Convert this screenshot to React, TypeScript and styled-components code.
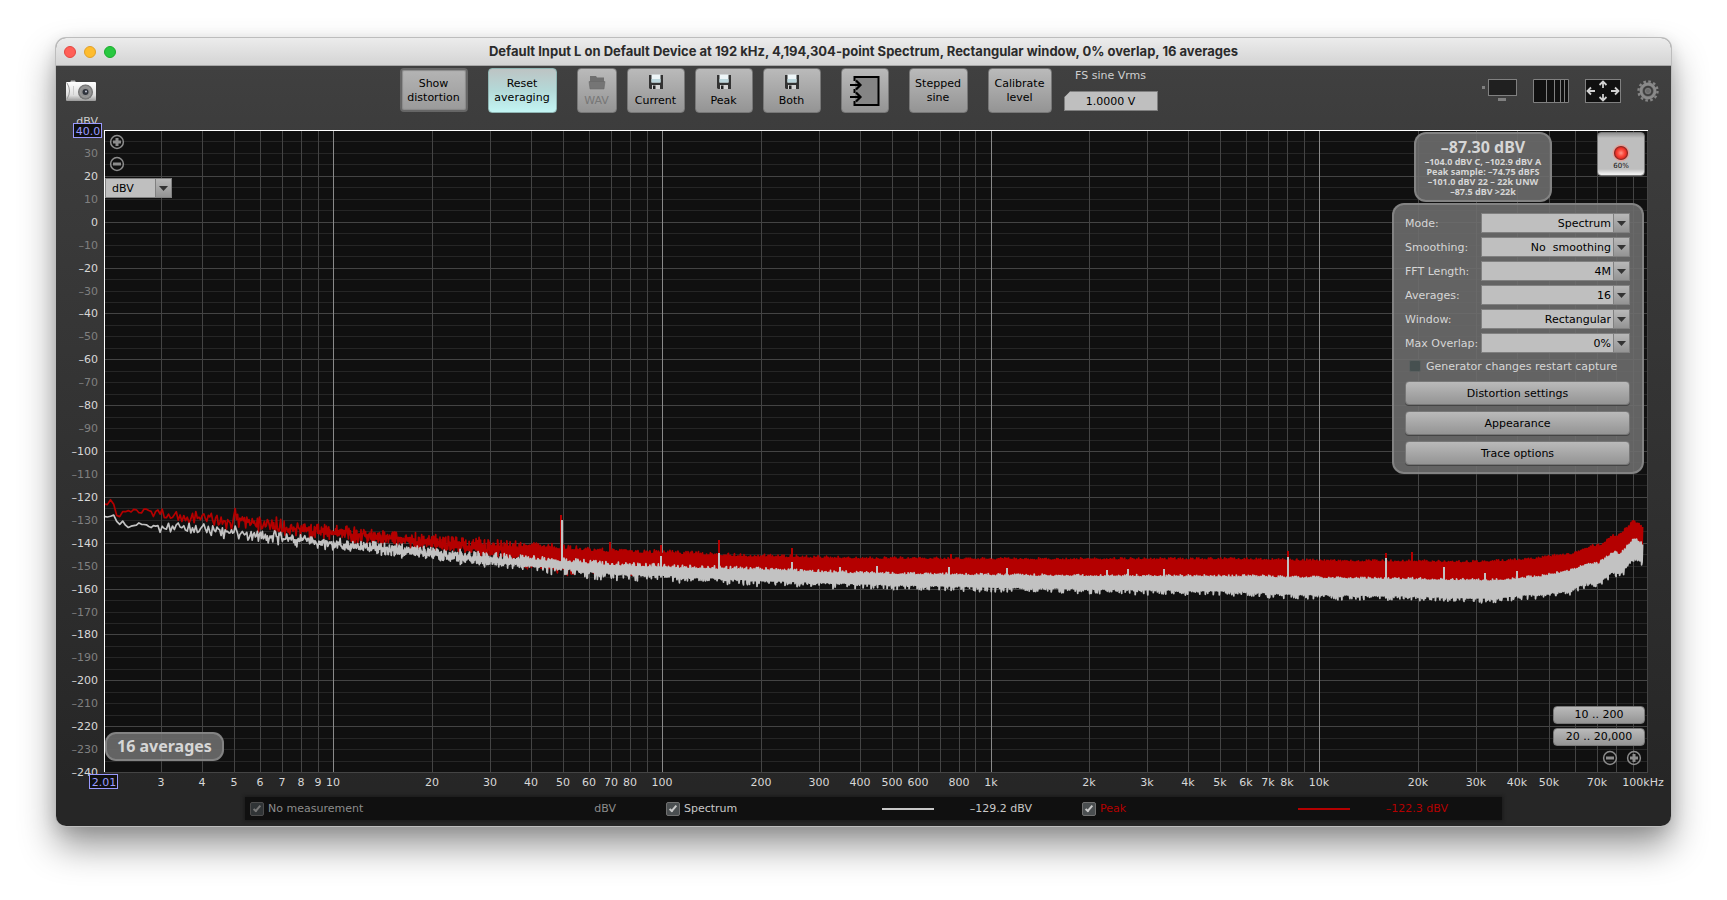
import React, { useLayoutEffect, useMemo, useRef, useState } from "react";
import styled, { createGlobalStyle, css } from "styled-components";

const UI = `"Lucida Grande", "DejaVu Sans", sans-serif`;
const HEAVY = `"Noto Sans", "DejaVu Sans", sans-serif`;

const GlobalStyle = createGlobalStyle`
  *, *::before, *::after { box-sizing: border-box; }
  body { margin: 0; background: #fff; font-family: ${UI}; font-size: 11px; }
  button, input, select { font: inherit; margin: 0; }
`;

/* ---------- window frame ---------- */

const Page = styled.div`
  display: flex;
  height: 100vh;
  min-height: 720px;
  padding: 38px 56px 74px;
`;

const Window = styled.main`
  flex: 1;
  min-width: 0;
  display: flex;
  flex-direction: column;
  border-radius: 10px;
  overflow: hidden;
  background: linear-gradient(#404040 28px, #3d3d3d 80px, #262626 95%);
  box-shadow: 0 0 0 1px #bdbdbd, 0 20px 36px rgba(0, 0, 0, 0.42), 0 4px 16px rgba(0, 0, 0, 0.12);
`;

const TitleBar = styled.header`
  display: grid;
  grid-template-columns: 1fr auto 1fr;
  align-items: center;
  height: 28px;
  padding: 0 8px;
  background: linear-gradient(#ececec, #d4d4d4);
  border-bottom: 1px solid #a8a8a8;
`;

const Lights = styled.div`
  display: flex;
  gap: 8px;
`;

const Light = styled.button<{ $fill: string; $edge: string }>`
  width: 12px;
  height: 12px;
  padding: 0;
  border: 1px solid ${(p) => p.$edge};
  border-radius: 50%;
  background: ${(p) => p.$fill};
`;

const Title = styled.h1`
  margin: 0;
  padding-bottom: 1px;
  font: 700 13px Inter, sans-serif;
  color: #2b2b2b;
  white-space: nowrap;
`;

/* ---------- toolbar ---------- */

const Toolbar = styled.div`
  display: flex;
  justify-content: space-between;
  align-items: flex-start;
  height: 48px;
  padding: 2px 10px 0;
`;

const ToolGroup = styled.div<{ $gap: number }>`
  display: flex;
  gap: ${(p) => p.$gap}px;
`;

const Tools = styled(ToolGroup)`
  margin-right: 20px;
`;

const raised = css`
  border: 1px solid #777;
  border-radius: 4px;
  background: linear-gradient(#bababa, #949494);
  color: #000;
`;

const ToolButton = styled.button<{ $w: number; $look?: "pressed" | "active" }>`
  ${raised}
  display: flex;
  flex-direction: column;
  align-items: center;
  justify-content: center;
  gap: 4px;
  width: ${(p) => p.$w}px;
  height: 45px;
  padding: 1px 0 0;
  line-height: 14px;
  &:disabled {
    color: #777;
  }
  ${(p) =>
    p.$look === "pressed" &&
    css`
      height: 44px;
      border: 2px solid #666;
      background: linear-gradient(#b4b4b4, #9a9a9a);
      box-shadow: inset 0 0 1px 1px #8a8a8a;
    `}
  ${(p) =>
    p.$look === "active" &&
    css`
      border-color: #8fb5b3;
      background: linear-gradient(#bdc4c4, #b4d9d8 50%, #c3f5f4);
    `}
`;

const LevelField = styled.label`
  display: flex;
  flex-direction: column;
  align-items: center;
  justify-content: space-between;
  width: 94px;
  height: 43px;
  padding-top: 1px;
  color: #cfcfcf;
`;

const LevelInput = styled.input`
  width: 100%;
  height: 20px;
  padding: 0;
  border: 1px solid #808080;
  background: #bfbfbf;
  color: #000;
  text-align: center;
  clip-path: polygon(7px 0, 100% 0, 100% 100%, 0 100%, 0 7px);
`;

const IconButton = styled.button`
  display: flex;
  padding: 0;
  border: 0;
  background: none;
`;

const CameraSlot = styled.div`
  padding-top: 12px;
`;

const ViewIcons = styled.div`
  display: flex;
  align-items: center;
  gap: 16px;
  padding: 11px 2px 0 0;
`;

/* ---------- chart ---------- */

const ChartArea = styled.section`
  position: relative;
  flex: 1 1 0;
  min-height: 0;
  overflow: hidden;
`;

const ChartSvg = styled.svg`
  display: block;
  font-family: ${UI};
  font-size: 11px;
`;

const Overlay = styled.div`
  position: absolute;
  inset: 16px 23px 19px 48px;
  display: flex;
  justify-content: space-between;
`;

const LeftControls = styled.div`
  display: flex;
  flex-direction: column;
  align-items: flex-start;
  padding: 4px 0 11px 1px;
`;

const ZoomStack = styled.div`
  display: flex;
  flex-direction: column;
  gap: 6px;
  padding: 0 4px 6px;
`;

const RightControls = styled.div`
  display: flex;
  flex-direction: column;
  align-items: flex-end;
  padding: 2px 3px 6px 0;
`;

const ReadoutRow = styled.div`
  display: flex;
  align-items: flex-start;
  gap: 45px;
`;

const glass = css`
  border: 2px solid rgba(135, 135, 135, 0.9);
  background: rgba(110, 110, 110, 0.88);
  color: #d6d6d6;
`;

const Readout = styled.div`
  ${glass}
  width: 138px;
  height: 70px;
  padding-top: 3px;
  border-radius: 12px;
  text-align: center;
  font: 700 9px/10px ${HEAVY};
`;

const ReadoutMain = styled.div`
  font-size: 16px;
  line-height: 20px;
`;

const RecordButton = styled.button`
  display: flex;
  flex-direction: column;
  align-items: center;
  justify-content: flex-end;
  width: 48px;
  height: 44px;
  padding: 0 0 5px;
  border: 1px solid #777;
  border-radius: 4px;
  background: linear-gradient(#8f8f8f, #bebebe 5px, #bebebe 36px, #f0f0f0 41px);
  font-size: 7px;
  line-height: 8px;
  color: #111;
`;

const Settings = styled.form`
  ${glass}
  display: flex;
  flex-direction: column;
  width: 252px;
  margin: 1px 1px 0 0;
  padding: 8px 12px 1px 11px;
  border-radius: 12px;
`;

const SettingRow = styled.label`
  display: grid;
  grid-template-columns: 76px 1fr;
  align-items: center;
  height: 20px;
  margin-bottom: 4px;
  white-space: nowrap;
`;

const ComboBox = styled.span<{ $w?: number }>`
  position: relative;
  display: flex;
  width: ${(p) => (p.$w ? p.$w + "px" : "auto")};
  height: 20px;
`;

const ComboSelect = styled.select<{ $align: "left" | "right" }>`
  appearance: none;
  width: 100%;
  padding: 0 ${(p) => (p.$align === "right" ? 18 : 17)}px 0 6px;
  border: 1px solid #808080;
  border-radius: 0;
  background: linear-gradient(90deg, #bfbfbf, #bfbfbf);
  color: #000;
  text-align-last: ${(p) => p.$align};
`;

const ComboArrow = styled.span`
  position: absolute;
  top: 0;
  right: 0;
  display: flex;
  align-items: center;
  justify-content: center;
  width: 17px;
  height: 20px;
  border: 1px solid #808080;
  background: linear-gradient(#b8b8b8, #949494);
  pointer-events: none;
`;

const CheckRow = styled.label`
  display: flex;
  align-items: center;
  gap: 5px;
  height: 18px;
  margin-bottom: 6px;
  padding-left: 4px;
  white-space: nowrap;
`;

const Tick = styled.input<{ $size: number }>`
  appearance: none;
  position: relative;
  flex: none;
  width: ${(p) => p.$size}px;
  height: ${(p) => p.$size}px;
  border: 1px solid #5b6060;
  border-radius: 2px;
  background: #465050;
  &:checked {
    border-color: #707070;
    background: #4a4e50;
  }
  &:checked::after {
    content: "";
    position: absolute;
    left: 4px;
    top: 1px;
    width: 4px;
    height: 8px;
    border: solid #c8c8c8;
    border-width: 0 2px 2px 0;
    transform: rotate(40deg);
  }
  &:disabled {
    border-color: #4c4c4c;
    background: #303436;
  }
  &:disabled::after {
    border-color: #777;
  }
`;

const PanelButton = styled.button`
  ${raised}
  height: 24px;
  margin-bottom: 6px;
  padding: 0;
  box-shadow: 0 1px 0 #444;
`;

const RangeControls = styled.div`
  display: flex;
  flex-direction: column;
  gap: 4px;
  width: 92px;
  margin-top: auto;
`;

const RangeButton = styled.button`
  ${raised}
  height: 18px;
  padding: 0;
  line-height: 16px;
`;

const ZoomPair = styled.div`
  display: flex;
  justify-content: flex-end;
  gap: 8px;
  padding-right: 3px;
`;

const Averages = styled.div`
  ${glass}
  margin-top: auto;
  padding: 0 10px;
  border-radius: 11px;
  font: 700 16px/25px ${HEAVY};
`;

/* ---------- legend ---------- */

const Legend = styled.footer`
  display: grid;
  grid-template-columns: repeat(3, 1fr);
  align-items: center;
  height: 23px;
  margin: 6px 169px 6px 189px;
  padding: 0 4px 0 5px;
  background: #101010;
  box-shadow: 0 0 3px 1px #1a1a1a;
`;

const LegendItem = styled.div<{ $color: string }>`
  display: flex;
  align-items: center;
  padding-right: 50px;
  color: ${(p) => p.$color};
  label {
    display: flex;
    align-items: center;
    gap: 4px;
    margin-right: auto;
  }
`;

const LegendLine = styled.span`
  width: 52px;
  height: 2px;
  background: currentColor;
`;

const LegendValue = styled.output`
  width: 98px;
  text-align: right;
`;

/* ---------- icons ---------- */

const Camera = () => (
  <svg width="30" height="21" viewBox="0 0 30 21">
    <defs>
      <linearGradient id="camBody" x1="0" y1="0" x2="0" y2="1">
        <stop offset="0" stopColor="#fff" />
        <stop offset="0.7" stopColor="#dedede" />
        <stop offset="1" stopColor="#999" />
      </linearGradient>
      <radialGradient id="camLens">
        <stop offset="0" stopColor="#ddd" />
        <stop offset="0.6" stopColor="#aaa" />
        <stop offset="1" stopColor="#666" />
      </radialGradient>
    </defs>
    <path d="M5 0.5h4l1 2H4z" fill="#bbb" />
    <rect y="2" width="30" height="19" rx="1" fill="url(#camBody)" />
    <path d="M1 3q5 8 0 16" stroke="#999" fill="none" />
    <path d="M7.500 6v9" stroke="#ccc" fill="none" />
    <circle cx="19.500" cy="12" r="7.500" fill="url(#camLens)" />
    <circle cx="19.500" cy="12" r="5" fill="#8f8f8f" />
    <circle cx="19.500" cy="12" r="3" fill="#30343c" />
    <circle cx="20" cy="11.500" r="1" fill="#c4c8d8" />
  </svg>
);

const Floppy = () => (
  <svg width="16" height="16" viewBox="0 0 16 16">
    <path d="M1 1h14v14H2l-1-1z" fill="#333" />
    <path d="M3.500 0.500h9v8h-9z" fill="#eef6f8" />
    <path d="M3.500 5h9v3.500h-9z" fill="#bcd6dc" />
    <path d="M4 11h8v4H4z" fill="#d4d4d4" />
    <path d="M5 11.500h2.500V15H5z" fill="#222" />
  </svg>
);

const Folder = () => (
  <svg width="18" height="16" viewBox="0 0 18 16">
    <path d="M2 2h6l1 1.500h7V8H2z" fill="#6f6f6f" />
    <path d="M1 7.500h16L16 15H2z" fill="#757575" stroke="#666" strokeWidth="0.500" />
  </svg>
);

const InputIcon = () => (
  <svg width="30" height="32" viewBox="0 0 30 32" fill="none" stroke="#000" strokeWidth="2">
    <path d="M5 2h23v28H5z" fill="#858585" stroke="none" />
    <path d="M4.500 6V2H28.500v28H4.500v-4M4.500 14v4" />
    <path d="M0 10h10M6 5.500l4.500 4.500L6 14.500M0 22h10M6 17.500l4.500 4.500L6 26.500" strokeWidth="2.200" />
  </svg>
);

const ScrollIcon = () => (
  <svg width="36" height="24" viewBox="0 0 36 24">
    <rect x="7.500" y="0.500" width="28" height="16" fill="#202020" stroke="#808080" />
    <rect x="1" y="7" width="3" height="3" fill="#808080" />
    <rect x="17" y="19" width="8" height="3" fill="#808080" />
  </svg>
);

const BandsIcon = () => (
  <svg width="36" height="24" viewBox="0 0 36 24">
    <path d="M0.500 0.500h35v23h-35zM13.500 0.500v23M21.500 0.500v23M27.500 0.500v23M31.500 0.500v23" fill="#101010" stroke="#808080" />
  </svg>
);

const FitIcon = () => (
  <svg width="36" height="24" viewBox="0 0 36 24">
    <rect x="0.500" y="0.500" width="35" height="23" fill="#101010" stroke="#808080" />
    <path
      d="M18 9V3M14.500 6L18 2.500 21.500 6M18 15v6M14.500 18l3.500 3.500 3.500-3.500M10 12H3M6 8.500L2.500 12 6 15.500M26 12h7M30 8.500l3.500 3.500-3.500 3.500"
      fill="none"
      stroke="#d0d0d0"
      strokeWidth="1.800"
    />
  </svg>
);

const Gear = () => (
  <svg width="22" height="22" viewBox="0 0 22 22">
    <circle cx="11" cy="11" r="9.500" fill="none" stroke="#858585" strokeWidth="2.400" strokeDasharray="2.600 2.374" />
    <circle cx="11" cy="11" r="7" fill="#5c5c5c" stroke="#8a8a8a" strokeWidth="2.800" />
    <circle cx="11" cy="11" r="4.200" fill="#5a5a5a" stroke="#3c3c3c" strokeWidth="1.400" />
    <circle cx="11" cy="11" r="2.600" fill="#6c6c6c" stroke="#808080" strokeWidth="0.800" />
  </svg>
);

const RecordLamp = () => (
  <svg width="18" height="18" viewBox="0 0 18 18">
    <defs>
      <radialGradient id="lamp">
        <stop offset="0" stopColor="#ff9488" />
        <stop offset="0.500" stopColor="#fb4a3c" />
        <stop offset="1" stopColor="#d8201a" />
      </radialGradient>
    </defs>
    <circle cx="9" cy="9" r="8.500" fill="#dfa39d" />
    <circle cx="9" cy="9" r="6.500" fill="url(#lamp)" stroke="#8c2a24" strokeWidth="1.200" />
  </svg>
);

const ZoomGlyph = ({ plus }: { plus?: boolean }) => (
  <svg width="16" height="16" viewBox="0 0 16 16" fill="none" stroke="#8c8c8c">
    <circle cx="8" cy="8" r="6.400" strokeWidth="1.500" />
    <path d={plus ? "M4 8h8M8 4v8" : "M4 8h8"} strokeWidth="3" />
  </svg>
);

const Combo = ({ label, value, align, width }: { label?: string; value: string; align: "left" | "right"; width?: number }) => (
  <ComboBox $w={width}>
    <ComboSelect $align={align} aria-label={label} defaultValue={value}>
      <option value={value}>{value}</option>
    </ComboSelect>
    <ComboArrow>
      <svg width="9" height="5" viewBox="0 0 9 5">
        <path d="M0 0h9L4.500 5z" fill="#333" />
      </svg>
    </ComboArrow>
  </ComboBox>
);

/* ---------- spectrum data ---------- */

const INSET = { left: 48, right: 23, top: 16, bottom: 19 };
const F_MIN = 2.01;
const F_MAX = 100000;
const DB_MAX = 40;
const DB_MIN = -240;

type Band = [x: number, top: number, bottom: number][];

/* Envelopes on a 1543 x 642 sheet that is scaled to the plot's size. */
const SHEET_W = 1543;
const SHEET_H = 642;

const PEAK: Band = [
  [0, 370, 376], [7, 368, 372], [13, 384, 388], [22, 376, 382], [41, 378, 387], [57, 378, 387], [66, 384, 390], [98, 382, 393],
  [130, 381, 400], [158, 387, 402], [196, 392, 407], [229, 396, 409], [328, 407, 419], [385, 410, 426],
  [457, 417, 440], [496, 420, 440], [557, 422, 441], [656, 426, 444], [756, 428, 447], [886, 429, 449],
  [1056, 429, 449], [1140, 429, 450], [1183, 430, 451], [1236, 431, 452], [1313, 431, 453], [1366, 432, 454],
  [1416, 430, 452], [1436, 428, 450], [1452, 425, 448], [1466, 424, 444], [1486, 416, 437], [1496, 415, 438],
  [1506, 406, 426], [1514, 405, 428], [1528, 391, 412], [1538, 397, 418],
];

const SPECTRUM: Band = [
  [0, 387, 390], [7, 384, 388], [16, 392, 395], [57, 393, 400], [98, 394, 403], [130, 398, 408], [158, 402, 411], [196, 406, 415],
  [229, 410, 419], [328, 419, 428], [385, 425, 435], [457, 430, 440], [496, 433, 445], [557, 436, 447],
  [656, 439, 452], [756, 443, 455], [886, 445, 458], [1056, 446, 461], [1140, 446, 462], [1183, 447, 465],
  [1236, 448, 466], [1313, 449, 467], [1366, 450, 469], [1391, 450, 469], [1416, 448, 466], [1436, 446, 465],
  [1452, 443, 463], [1466, 440, 461], [1483, 433, 452], [1493, 434, 454], [1508, 422, 442], [1515, 424, 445],
  [1529, 408, 428], [1538, 414, 434],
];

const PEAK_SPIKES = [[457, 385], [506, 412], [557, 415], [615, 410], [688, 418], [846, 424], [1183, 421], [1281, 423], [1307, 422]];
const SPECTRUM_SPIKES = [
  [458, 390], [557, 426], [615, 423], [688, 432], [736, 437], [772, 436], [844, 437], [902, 438], [1002, 440],
  [1023, 439], [1059, 439], [1183, 427], [1281, 428], [1339, 437], [1380, 443], [1412, 441],
];

const random = (seed: number) => () => {
  seed = (seed * 1664525 + 1013904223) >>> 0;
  return seed / 4294967296;
};

const envelope = (band: Band, x: number) => {
  let i = 1;
  while (i < band.length - 1 && band[i][0] < x) i++;
  const a = band[i - 1];
  const b = band[i];
  const t = (x - a[0]) / (b[0] - a[0]);
  return [a[1] + (b[1] - a[1]) * t, a[2] + (b[2] - a[2]) * t];
};

const tracePath = (band: Band, seed: number, w: number, h: number) => {
  const rnd = random(seed);
  const sx = w / SHEET_W;
  const sy = h / SHEET_H;
  const pts: string[] = [];
  let up = false;
  let x = 0;
  while (x <= 1538) {
    const [top, bottom] = envelope(band, x);
    if (x < 420) {
      const t = (rnd() + rnd()) / 2;
      pts.push((x * sx).toFixed(1) + " " + ((top - 3 + (bottom - top + 6) * t) * sy).toFixed(1));
      x += Math.max(0.25, 3.300 * Math.pow(10, -x / 300));
    } else {
      const settle = Math.min(1, (x - 420) / 400);
      const loose = 5 - 2.500 * settle;
      const hi = top + loose / 2 - Math.pow(rnd(), 2) * loose;
      const lo = bottom - loose / 2 + Math.pow(rnd(), 3) * (loose + 3);
      const first = up ? lo : hi;
      const second = up ? hi : lo;
      pts.push((x * sx).toFixed(1) + " " + (first * sy).toFixed(1), ((x + 0.500) * sx).toFixed(1) + " " + (second * sy).toFixed(1));
      up = !up;
      x += 1;
    }
  }
  return "M" + pts.join("L");
};

/* Each spike runs from its tip down to the middle of its trace. */
const spikePath = (spikes: number[][], band: Band, w: number, h: number) =>
  spikes
    .map(([x, y]) => {
      const [top, bottom] = envelope(band, x);
      const foot = (top + bottom) / 2;
      return `M${Math.round((x * w) / SHEET_W)} ${((y * h) / SHEET_H).toFixed(0)}V${((foot * h) / SHEET_H).toFixed(0)}`;
    })
    .join("");

const freqLines: { f: number; decade: boolean }[] = [];
for (let d = 1; d <= 10000; d *= 10) {
  for (let k = 1; k < 10; k++) if (d * k > F_MIN) freqLines.push({ f: d * k, decade: k === 1 && d > 1 });
}

const LABELLED = [
  3, 4, 5, 6, 7, 8, 9, 10, 20, 30, 40, 50, 60, 70, 80, 100, 200, 300, 400, 500, 600, 800, 1000, 2000, 3000, 4000, 5000,
  6000, 7000, 8000, 10000, 20000, 30000, 40000, 50000, 70000,
];
const freqText = (f: number) => (f >= 1000 ? f / 1000 + "k" : String(f));
const dbText = (v: number) => (v < 0 ? "–" + -v : String(v));

const Chart = ({ width, height }: { width: number; height: number }) => {
  const w = Math.max(0, width - INSET.left - INSET.right);
  const h = Math.max(0, height - INSET.top - INSET.bottom);
  const X = (f: number) => Math.round((Math.log10(f / F_MIN) / Math.log10(F_MAX / F_MIN)) * w);
  const Y = (v: number) => Math.round(((DB_MAX - v) / (DB_MAX - DB_MIN)) * h);
  const paths = useMemo(
    () => ({
      peak: tracePath(PEAK, 7, w, h),
      spectrum: tracePath(SPECTRUM, 99, w, h),
      peakSpikes: spikePath(PEAK_SPIKES, PEAK, w, h),
      spectrumSpikes: spikePath(SPECTRUM_SPIKES, SPECTRUM, w, h),
    }),
    [w, h]
  );
  const levels: number[] = [];
  for (let v = DB_MAX - 5; v >= DB_MIN; v -= 5) levels.push(v);

  return (
    <ChartSvg width={width} height={height} role="img" aria-label="Spectrum">
      <g transform={`translate(${INSET.left} ${INSET.top})`}>
        <rect width={w} height={h} fill="#101010" />
        <g shapeRendering="crispEdges">
          {levels.map((v) => (
            <rect key={v} y={Y(v)} width={w} height="1" fill={v % 20 === 0 ? "#444" : "#262626"} />
          ))}
          {freqLines.map(({ f, decade }) => (
            <rect key={f} x={X(f)} width="1" height={h} fill={decade ? "#8a8a8a" : "#444"} />
          ))}
          <rect x={w - 1} width="1" height={h} fill="#444" />
        </g>
        <g fill="none" strokeLinejoin="round">
          <path d={paths.peak} stroke="#b40000" strokeWidth="1.700" />
          <path d={paths.peakSpikes} stroke="#b40000" strokeWidth="2" />
          <path d={paths.spectrum} stroke="#c2c2c2" strokeWidth="1.700" />
          <path d={paths.spectrumSpikes} stroke="#c2c2c2" strokeWidth="2" />
        </g>
        <rect x="0" y="0" width={w} height="1" fill="#fff" />
        <rect x="0" y="0" width="1" height={h} fill="#fff" />
        <g textAnchor="end">
          <text x="-6" y="-5" fill="#d0d0d0">
            dBV
          </text>
          {levels
            .filter((v) => v % 10 === 0)
            .map((v) => (
              <text key={v} x="-6" y={Y(v) + 4} fill={v % 20 === 0 ? "#d8d8d8" : "#808080"}>
                {dbText(v)}
              </text>
            ))}
        </g>
        <g textAnchor="middle" fill="#d8d8d8">
          {LABELLED.map((f) => (
            <text key={f} x={X(f)} y={h + 14}>
              {freqText(f)}
            </text>
          ))}
          <text x={w - 5} y={h + 14}>
            100kHz
          </text>
        </g>
        <g fill="#101010" stroke="#9a9aff">
          <rect x="-30.500" y="-6.500" width="28" height="14" />
          <rect x="-14.500" y={h + 2.500} width="28" height="14" />
        </g>
        <g fill="#9a9aff" textAnchor="middle">
          <text x="-16" y="5">
            40.0
          </text>
          <text x="0" y={h + 14}>
            2.01
          </text>
        </g>
      </g>
    </ChartSvg>
  );
};

const SETTINGS: [string, string][] = [
  ["Mode:", "Spectrum"],
  ["Smoothing:", "No\u00a0 smoothing"],
  ["FFT Length:", "4M"],
  ["Averages:", "16"],
  ["Window:", "Rectangular"],
  ["Max Overlap:", "0%"],
];

export default function App() {
  const areaRef = useRef<HTMLElement>(null);
  const [size, setSize] = useState({ width: 0, height: 0 });

  useLayoutEffect(() => {
    const el = areaRef.current;
    if (!el) return;
    const measure = () => setSize({ width: el.clientWidth, height: el.clientHeight });
    measure();
    const observer = new ResizeObserver(measure);
    observer.observe(el);
    return () => observer.disconnect();
  }, []);

  return (
    <Page>
      <GlobalStyle />
      <Window>
        <TitleBar>
          <Lights>
            <Light $fill="#ff5f57" $edge="#e2463f" aria-label="Close" />
            <Light $fill="#febc2e" $edge="#e0a028" aria-label="Minimize" />
            <Light $fill="#28c840" $edge="#1aab2b" aria-label="Zoom" />
          </Lights>
          <Title>
            Default Input L on Default Device at 192 kHz, 4,194,304-point Spectrum, Rectangular window, 0% overlap, 16
            averages
          </Title>
        </TitleBar>

        <Toolbar>
          <CameraSlot>
            <IconButton aria-label="Capture image">
              <Camera />
            </IconButton>
          </CameraSlot>
          <Tools $gap={20}>
            <ToolButton $w={68} $look="pressed">
              <span>
                Show
                <br />
                distortion
              </span>
            </ToolButton>
            <ToolButton $w={69} $look="active">
              <span>
                Reset
                <br />
                averaging
              </span>
            </ToolButton>
            <ToolGroup $gap={10}>
              <ToolButton $w={40} disabled>
                <Folder />
                WAV
              </ToolButton>
              <ToolButton $w={58}>
                <Floppy />
                Current
              </ToolButton>
              <ToolButton $w={58}>
                <Floppy />
                Peak
              </ToolButton>
              <ToolButton $w={58}>
                <Floppy />
                Both
              </ToolButton>
            </ToolGroup>
            <ToolButton $w={48} aria-label="Input">
              <InputIcon />
            </ToolButton>
            <ToolButton $w={59}>
              <span>
                Stepped
                <br />
                sine
              </span>
            </ToolButton>
            <ToolGroup $gap={12}>
              <ToolButton $w={64}>
                <span>
                  Calibrate
                  <br />
                  level
                </span>
              </ToolButton>
              <LevelField>
                FS sine Vrms
                <LevelInput defaultValue="1.0000 V" />
              </LevelField>
            </ToolGroup>
          </Tools>
          <ViewIcons>
            <IconButton aria-label="Scrollbars">
              <ScrollIcon />
            </IconButton>
            <IconButton aria-label="Frequency axis">
              <BandsIcon />
            </IconButton>
            <IconButton aria-label="Graph limits">
              <FitIcon />
            </IconButton>
            <IconButton aria-label="Settings">
              <Gear />
            </IconButton>
          </ViewIcons>
        </Toolbar>

        <ChartArea ref={areaRef}>
          <Chart width={size.width} height={size.height} />
          <Overlay>
            <LeftControls>
              <ZoomStack>
                <IconButton aria-label="Zoom level in">
                  <ZoomGlyph plus />
                </IconButton>
                <IconButton aria-label="Zoom level out">
                  <ZoomGlyph />
                </IconButton>
              </ZoomStack>
              <Combo label="Units" value="dBV" align="left" width={67} />
              <Averages>16 averages</Averages>
            </LeftControls>
            <RightControls>
              <ReadoutRow>
                <Readout>
                  <ReadoutMain>–87.30 dBV</ReadoutMain>
                  <div>–104.0 dBV C, –102.9 dBV A</div>
                  <div>Peak sample: –74.75 dBFS</div>
                  <div>–101.0 dBV 22 – 22k UNW</div>
                  <div>–87.5 dBV &gt;22k</div>
                </Readout>
                <RecordButton>
                  <RecordLamp />
                  60%
                </RecordButton>
              </ReadoutRow>
              <Settings>
                {SETTINGS.map(([label, value]) => (
                  <SettingRow key={label}>
                    {label}
                    <Combo value={value} align="right" />
                  </SettingRow>
                ))}
                <CheckRow>
                  <Tick type="checkbox" $size={12} />
                  Generator changes restart capture
                </CheckRow>
                <PanelButton type="button">Distortion settings</PanelButton>
                <PanelButton type="button">Appearance</PanelButton>
                <PanelButton type="button">Trace options</PanelButton>
              </Settings>
              <RangeControls>
                <RangeButton>10 .. 200</RangeButton>
                <RangeButton>20 .. 20,000</RangeButton>
                <ZoomPair>
                  <IconButton aria-label="Zoom frequency out">
                    <ZoomGlyph />
                  </IconButton>
                  <IconButton aria-label="Zoom frequency in">
                    <ZoomGlyph plus />
                  </IconButton>
                </ZoomPair>
              </RangeControls>
            </RightControls>
          </Overlay>
        </ChartArea>

        <Legend>
          <LegendItem $color="#8c8c8c">
            <label>
              <Tick type="checkbox" $size={14} defaultChecked disabled />
              No measurement
            </label>
            <LegendValue>dBV</LegendValue>
          </LegendItem>
          <LegendItem $color="#c8c8c8">
            <label>
              <Tick type="checkbox" $size={14} defaultChecked />
              Spectrum
            </label>
            <LegendLine />
            <LegendValue>–129.2 dBV</LegendValue>
          </LegendItem>
          <LegendItem $color="#b40000">
            <label>
              <Tick type="checkbox" $size={14} defaultChecked />
              Peak
            </label>
            <LegendLine />
            <LegendValue>–122.3 dBV</LegendValue>
          </LegendItem>
        </Legend>
      </Window>
    </Page>
  );
}
